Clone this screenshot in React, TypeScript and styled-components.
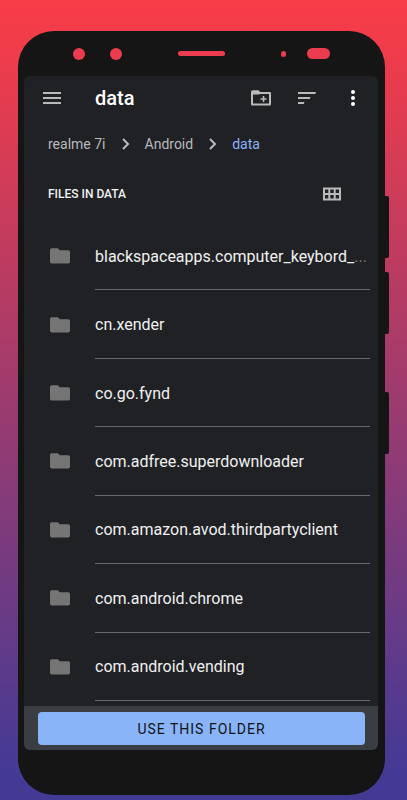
import React from "react";
import styled, { createGlobalStyle } from "styled-components";

const GlobalStyle = createGlobalStyle`
  *, *::before, *::after { box-sizing: border-box; }
  body {
    margin: 0;
    font-family: Roboto, "Liberation Sans", sans-serif;
    -webkit-font-smoothing: antialiased;
  }
  button { font: inherit; border: 0; padding: 0; background: none; cursor: pointer; }
`;

const Page = styled.div`
  min-height: 100vh;
  display: flex;
  padding: 31px 22px 5px 18px;
  background: linear-gradient(180deg, #f83c48 0%, #f03c4a 6%, #433a96 97%, #433a96 100%);
`;

const Phone = styled.div`
  position: relative;
  flex: 1;
  min-width: 0;
  display: flex;
  flex-direction: column;
  padding: 0 7px 45px 6px;
  border-radius: 36px;
  background: #151515;
`;

const SideKey = styled.span<{ $top: number }>`
  position: absolute;
  right: -4px;
  top: ${(p) => p.$top}px;
  width: 8px;
  height: 62px;
  border-radius: 2px;
  background: #151515;
`;

const SensorBar = styled.div`
  display: grid;
  grid-template-columns: 1fr auto 1fr;
  align-items: center;
  height: 45px;
  padding: 0 48px 0 49px;
`;

const SensorGroup = styled.div<{ $gap: number; $end?: boolean }>`
  display: flex;
  align-items: center;
  justify-content: ${(p) => (p.$end ? "flex-end" : "flex-start")};
  gap: ${(p) => p.$gap}px;
`;

const Sensor = styled.span<{ $w: number; $h: number }>`
  width: ${(p) => p.$w}px;
  height: ${(p) => p.$h}px;
  border-radius: 6px;
  background: #ea3c4e;
`;

const Screen = styled.main`
  flex: 1;
  min-width: 0;
  display: flex;
  flex-direction: column;
  overflow: hidden;
  border-radius: 6px;
  background: #202125;
  color: #f1f1f1;
`;

const Toolbar = styled.header`
  display: flex;
  align-items: center;
  height: 44px;
  padding: 0 13px 0 16px;
`;

const Title = styled.h1`
  flex: 1;
  margin: 0 0 0 31px;
  font-size: 20px;
  line-height: 24px;
  font-weight: 500;
  color: #ffffff;
`;

const IconButton = styled.button<{ $color?: string }>`
  display: flex;
  align-items: center;
  justify-content: center;
  width: 24px;
  height: 24px;
  color: ${(p) => p.$color ?? "#b9bab9"};
`;

const Actions = styled.div`
  display: flex;
  gap: 22px;
`;

const Crumbs = styled.nav`
  display: flex;
  align-items: center;
  height: 48px;
  padding: 0 24px;
  gap: 13px;
`;

const Crumb = styled.a<{ $current?: boolean }>`
  font-size: 14px;
  line-height: 20px;
  text-decoration: none;
  color: ${(p) => (p.$current ? "#8ab4f8" : "#b9babc")};
`;

const SectionHeader = styled.div`
  display: flex;
  align-items: center;
  justify-content: space-between;
  height: 52px;
  padding: 0 34px 0 24px;
`;

const SectionTitle = styled.h2`
  margin: 0;
  font-size: 12px;
  line-height: 16px;
  font-weight: 500;
  color: #f1f1f1;
`;

const FileList = styled.ul`
  flex: 1;
  display: flex;
  flex-direction: column;
  margin: 0;
  padding: 2px 8px 5px 24px;
  list-style: none;
`;

const FileRow = styled.li`
  flex: 1;
  display: flex;
  align-items: stretch;
  gap: 23px;
  min-height: 48px;
`;

const FileIcon = styled.span`
  display: flex;
  align-items: center;
  width: 24px;
  color: #757575;
`;

const FileName = styled.span`
  flex: 1;
  min-width: 0;
  display: flex;
  align-items: center;
  padding-top: 2px;
  border-bottom: 1px solid #66686b;
  font-size: 16px;
  line-height: 20px;
  white-space: nowrap;
`;

const Truncation = styled.span`
  color: #77787b;
`;

const Footer = styled.footer`
  display: flex;
  height: 44px;
  padding: 6px 13px 5px 14px;
  background: #3a3e43;
`;

const UseButton = styled.button`
  flex: 1;
  border-radius: 4px;
  background: #8ab4f8;
  color: #101216;
  && {
    font-size: 14px;
    line-height: 20px;
    font-weight: 400;
    letter-spacing: 1px;
  }
`;

const MenuIcon = () => (
  <svg width="18" height="12" viewBox="0 0 18 12" fill="currentColor" aria-hidden="true">
    <path d="M0 0h18v2H0zM0 5h18v2H0zM0 10h18v2H0z" />
  </svg>
);

const NewFolderIcon = () => (
  <svg width="20" height="16" viewBox="0 0 20 16" aria-hidden="true">
    <path d="M1 3h18v11.5H1z" fill="none" stroke="currentColor" strokeWidth="2" strokeLinejoin="round" />
    <path d="M0 3V2A1.8 1.8 0 0 1 1.8.2h5.7L9.4 2.2 8.4 4.6H0z" fill="currentColor" />
    <path d="M12.5 6v6M9.5 9h6" stroke="currentColor" strokeWidth="1.6" fill="none" />
  </svg>
);

const SortIcon = () => (
  <svg width="18" height="12" viewBox="0 0 18 12" fill="currentColor" aria-hidden="true">
    <path d="M0 0h18l-.7 2H0zM0 5h12.5l-.7 2H0zM0 10h6.5l-.7 2H0z" />
  </svg>
);

const MoreIcon = () => (
  <svg width="4" height="16" viewBox="0 0 4 16" fill="currentColor" aria-hidden="true">
    <circle cx="2" cy="2" r="2" />
    <circle cx="2" cy="8" r="2" />
    <circle cx="2" cy="14" r="2" />
  </svg>
);

const GridIcon = () => (
  <svg width="18" height="14" viewBox="0 0 18 14" aria-hidden="true">
    <path
      fill="currentColor"
      fillRule="evenodd"
      d="M0 .5h18v13H0zM2 2.5V6h3.3V2.5zM7.3 2.5V6h3.4V2.5zM12.7 2.5V6H16V2.5zM2 8v3.5h3.3V8zM7.3 8v3.5h3.4V8zM12.7 8v3.5H16V8z"
    />
  </svg>
);

const ChevronIcon = () => (
  <svg width="13" height="12" viewBox="0 0 13 12" fill="none" aria-hidden="true">
    <path d="M4 1l5 5-5 5" stroke="#b9babc" strokeWidth="2" />
  </svg>
);

const FolderIcon = () => (
  <svg width="24" height="16" viewBox="0 0 24 16" fill="currentColor" aria-hidden="true">
    <path d="M2 2A1.8 1.8 0 0 1 3.8.2H9.8L11.8 2.2H20.2A1.8 1.8 0 0 1 22 4V13.8A1.8 1.8 0 0 1 20.2 15.6H3.8A1.8 1.8 0 0 1 2 13.8z" />
  </svg>
);

const files = [
  { name: "blackspaceapps.computer_keybord_", truncated: true },
  { name: "cn.xender" },
  { name: "co.go.fynd" },
  { name: "com.adfree.superdownloader" },
  { name: "com.amazon.avod.thirdpartyclient" },
  { name: "com.android.chrome" },
  { name: "com.android.vending" },
];

export default function App() {
  return (
    <>
      <GlobalStyle />
      <Page>
        <Phone>
          <SideKey $top={165} />
          <SideKey $top={241} />
          <SideKey $top={361} />
          <SensorBar>
            <SensorGroup $gap={25}>
              <Sensor $w={12} $h={12} />
              <Sensor $w={12} $h={12} />
            </SensorGroup>
            <Sensor $w={47} $h={5} />
            <SensorGroup $gap={21} $end>
              <Sensor $w={5} $h={6} />
              <Sensor $w={23} $h={11} />
            </SensorGroup>
          </SensorBar>
          <Screen>
            <Toolbar>
              <IconButton aria-label="Menu"><MenuIcon /></IconButton>
              <Title>data</Title>
              <Actions>
                <IconButton aria-label="New folder"><NewFolderIcon /></IconButton>
                <IconButton aria-label="Sort"><SortIcon /></IconButton>
                <IconButton aria-label="More options" $color="#ffffff"><MoreIcon /></IconButton>
              </Actions>
            </Toolbar>
            <Crumbs aria-label="Path">
              <Crumb href="#root">realme 7i</Crumb>
              <ChevronIcon />
              <Crumb href="#android">Android</Crumb>
              <ChevronIcon />
              <Crumb href="#data" $current aria-current="page">data</Crumb>
            </Crumbs>
            <SectionHeader>
              <SectionTitle>FILES IN DATA</SectionTitle>
              <IconButton aria-label="Grid view"><GridIcon /></IconButton>
            </SectionHeader>
            <FileList>
              {files.map((f) => (
                <FileRow key={f.name}>
                  <FileIcon><FolderIcon /></FileIcon>
                  <FileName>
                    {f.name}
                    {f.truncated && <Truncation>...</Truncation>}
                  </FileName>
                </FileRow>
              ))}
            </FileList>
            <Footer>
              <UseButton>USE THIS FOLDER</UseButton>
            </Footer>
          </Screen>
        </Phone>
      </Page>
    </>
  );
}
